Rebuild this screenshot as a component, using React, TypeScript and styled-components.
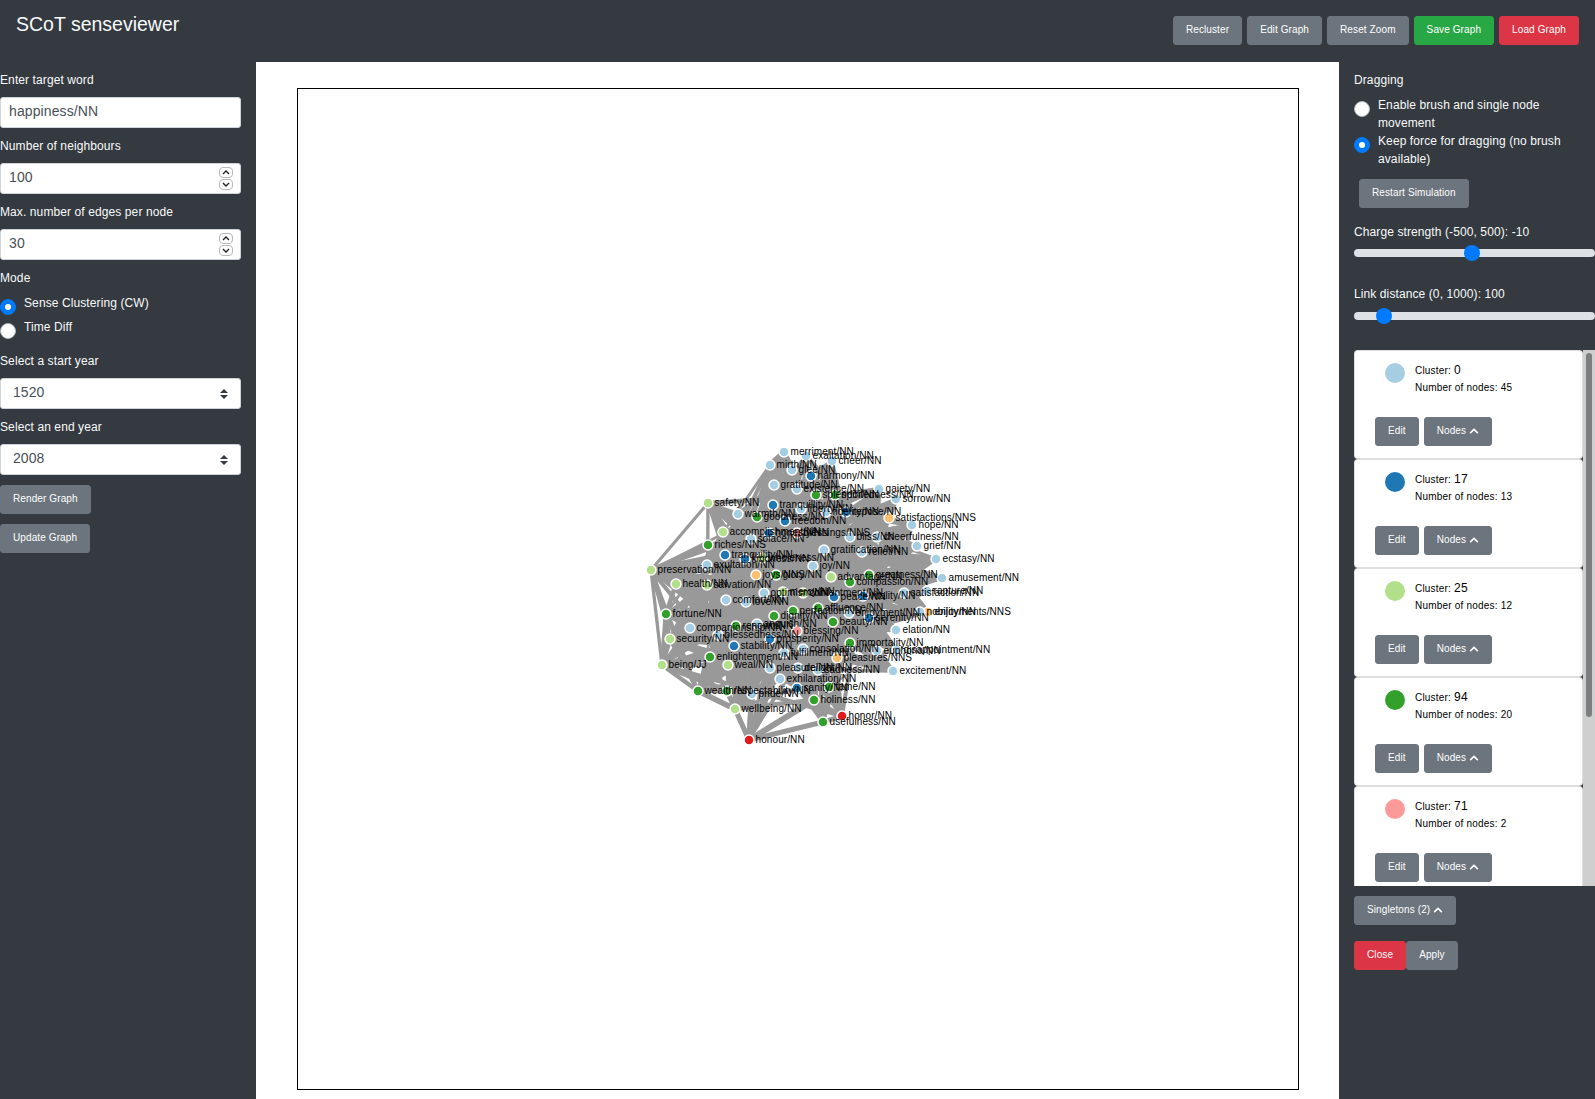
import React from 'react';
import styled, { createGlobalStyle } from 'styled-components';
import { FaChevronUp } from 'react-icons/fa';

const GlobalStyle = createGlobalStyle`
  html, body {
    margin: 0;
    height: 100%;
    overflow: hidden;
    background: #343a40;
    font-family: "Liberation Sans", Arial, sans-serif;
    font-size: 12px;
    line-height: 18px;
    letter-spacing: 0.1px;
    color: #f8f9fa;
  }
  * { box-sizing: border-box; }
`;

const Page = styled.div`
  height: 1099px;
  display: flex;
  flex-direction: column;
`;

const TopBar = styled.header`
  height: 62px;
  flex: none;
  display: flex;
  justify-content: space-between;
  align-items: flex-start;
  padding: 16px 16px 0;
`;

const Brand = styled.div`
  font-size: 19.5px;
  line-height: 17px;
  letter-spacing: 0;
`;

const TopActions = styled.div`
  display: flex;
  gap: 5px;
`;

const Button = styled.button<{ $tone?: 'grey' | 'green' | 'red' }>`
  font: inherit;
  font-size: 10px;
  line-height: 15px;
  letter-spacing: 0.11px;
  height: 29px;
  padding: 5px 12px 7px;
  border: 1px solid
    ${p => (p.$tone === 'green' ? '#28a745' : p.$tone === 'red' ? '#dc3545' : '#6c757d')};
  border-radius: 3px;
  color: #fff;
  white-space: nowrap;
  background: ${p => (p.$tone === 'green' ? '#28a745' : p.$tone === 'red' ? '#dc3545' : '#6c757d')};
  display: inline-flex;
  align-items: center;
  gap: 3px;
`;

const Body = styled.div`
  flex: 1;
  display: flex;
  min-height: 0;
`;

const LeftPanel = styled.aside`
  width: 256px;
  flex: none;
  padding: 9px 15.4px 0 0;
`;

const Field = styled.div`
  margin-bottom: 9px;
`;

const Label = styled.label`
  display: block;
  margin-bottom: 8px;
`;

const TextInput = styled.input`
  display: block;
  width: 100%;
  height: 31px;
  padding: 0 9px 4px 8px;
  background: #fff;
  border: 1px solid #ced4da;
  border-radius: 3px;
  font: inherit;
  font-size: 14px;
  letter-spacing: 0.1px;
  color: #495057;
  outline: none;
  appearance: textfield;

  &::-webkit-inner-spin-button {
    appearance: none;
    margin: 0;
  }
`;

const NumberWrap = styled.div`
  position: relative;
`;

const SpinStack = styled.div`
  position: absolute;
  right: 8px;
  top: 4px;
  display: flex;
  flex-direction: column;
  gap: 1px;
`;

const SpinKey = styled.span`
  width: 14px;
  height: 11px;
  border: 1px solid #b9b9b9;
  border-radius: 4px;
  background: #fff;
  display: flex;
  align-items: center;
  justify-content: center;
`;

const RadioRow = styled.label`
  display: flex;
  gap: 8px;
  align-items: flex-start;
`;

const RadioGroup = styled.div`
  height: 48px;
  margin-bottom: 9px;

  ${RadioRow} {
    height: 24px;
  }
`;

const RadioMark = styled.input`
  appearance: none;
  width: 16px;
  height: 16px;
  margin: 4px 0 0;
  flex: none;
  border-radius: 50%;
  background: #fff;
  border: 1px solid #adb5bd;
  position: relative;

  &:checked {
    background: #007bff;
    border-color: #007bff;
  }
  &:checked::after {
    content: '';
    position: absolute;
    left: 4px;
    top: 4px;
    width: 6px;
    height: 6px;
    border-radius: 50%;
    background: #fff;
  }
`;

const RadioText = styled.span`
  margin-top: -1px;
`;

const SelectWrap = styled.div`
  position: relative;

  svg {
    position: absolute;
    right: 13px;
    top: 11px;
  }
`;

const YearSelect = styled.select`
  appearance: none;
  display: block;
  width: 100%;
  height: 31px;
  padding: 0 12px 4px;
  background: #fff;
  border: 1px solid #ced4da;
  border-radius: 3px;
  font: inherit;
  font-size: 14px;
  letter-spacing: 0.08px;
  color: #495057;
`;

const LeftActions = styled.div`
  display: flex;
  flex-direction: column;
  align-items: flex-start;
  gap: 10px;
  margin-top: 10px;
`;

const Main = styled.main`
  flex: 1;
  background: #fff;
  padding: 26px 0 0 41px;
  display: flex;
  align-items: flex-start;
  min-width: 0;
`;

const GraphBox = styled.div`
  width: 1002px;
  height: 1002px;
  border: 1px solid #000;
  flex: none;

  svg {
    display: block;
  }
`;

const RightPanel = styled.aside`
  width: 256px;
  flex: none;
  padding: 9px 0 0 15px;
  display: flex;
  flex-direction: column;
  align-items: flex-start;
  overflow: hidden;
`;

const DragOptions = styled.div`
  margin-top: 7px;
  width: 226px;
`;

const DragRow = styled.label`
  display: flex;
  gap: 8px;
  align-items: flex-start;
  height: 36px;

  ${RadioMark} {
    margin-top: 5px;
  }
`;

const RestartWrap = styled.div`
  margin: 11px 0 0 5px;
`;

const SliderLabel = styled.div<{ $gap: number }>`
  margin-top: ${p => p.$gap}px;
`;

const Slider = styled.input<{ $offset: number }>`
  appearance: none;
  display: block;
  width: 240.5px;
  height: 16px;
  margin: ${p => p.$offset}px 0 0;
  background: transparent;
  flex: none;

  &::-webkit-slider-runnable-track {
    height: 8px;
    border-radius: 8px;
    background: #dee2e6;
  }
  &::-webkit-slider-thumb {
    appearance: none;
    width: 16px;
    height: 16px;
    margin-top: -4px;
    border-radius: 50%;
    background: #007bff;
  }
`;

const ClusterPane = styled.div`
  width: 241px;
  height: 536px;
  flex: none;
  margin-top: 26px;
  display: flex;
`;

const ClusterList = styled.div`
  width: 229px;
  flex: none;
  overflow: hidden;
`;

const ScrollTrack = styled.div`
  flex: 1;
  background: #cfcfcf;
  padding: 3px 0 0 3px;
`;

const ScrollThumb = styled.div`
  width: 6px;
  height: 364px;
  border-radius: 3px;
  background: #7b7f80;
`;

const Card = styled.article`
  height: 109px;
  background: #fff;
  border: 1px solid rgba(0, 0, 0, 0.125);
  border-radius: 4px;
  color: #000;
  padding: 11px 20px 0;
`;

const CardHead = styled.div`
  display: flex;
  gap: 10px;
  padding-left: 10px;
`;

const Swatch = styled.span<{ $color: string }>`
  width: 20px;
  height: 20px;
  margin-top: 1px;
  border-radius: 50%;
  flex: none;
  background: ${p => p.$color};
`;

const CardInfo = styled.div`
  font-size: 10px;
  line-height: 17px;
  letter-spacing: 0.2px;
`;

const ClusterId = styled.span`
  font-size: 12px;
`;

const CardActions = styled.div`
  display: flex;
  gap: 5px;
  margin-top: 21px;
`;

const BottomActions = styled.div`
  display: flex;
  margin-top: 16px;
`;

const SingletonWrap = styled.div`
  margin-top: 10px;
`;

type GraphNode = [string, number, number, string];

const blue = '#a6cee3';
const navy = '#1f78b4';
const lime = '#b2df8a';
const green = '#33a02c';
const pink = '#fb9a99';
const orange = '#fdbf6f';
const red = '#e31a1c';

const nodes: GraphNode[] = [
  ['safety/NN', 708, 503, lime],
  ['merriment/NN', 784, 452, blue],
  ['exaltation/NN', 806, 456, blue],
  ['mirth/NN', 770, 465, blue],
  ['glee/NN', 792, 470, blue],
  ['harmony/NN', 811, 476, navy],
  ['cheer/NN', 832, 461, blue],
  ['gratitude/NN', 774, 485, blue],
  ['existence/NN', 797, 489, blue],
  ['splendor/NN', 816, 495, green],
  ['spiritedness/NN', 835, 495, green],
  ['gaiety/NN', 879, 489, blue],
  ['sorrow/NN', 896, 499, blue],
  ['tranquillity/NN', 773, 505, navy],
  ['liberty/NN', 801, 509, blue],
  ['repose/NN', 846, 512, navy],
  ['fidelity/NN', 826, 512, blue],
  ['satisfactions/NNS', 889, 518, orange],
  ['warmth/NN', 738, 514, blue],
  ['goodness/NN', 757, 517, green],
  ['freedom/NN', 785, 521, navy],
  ['hope/NN', 912, 525, blue],
  ['accomplishment/NN', 723, 532, lime],
  ['honesty/NN', 769, 533, navy],
  ['blessings/NNS', 797, 533, pink],
  ['solace/NN', 751, 539, blue],
  ['bliss/NN', 850, 537, blue],
  ['cheerfulness/NN', 877, 537, blue],
  ['grief/NN', 917, 546, blue],
  ['riches/NNS', 708, 545, green],
  ['gratification/NN', 824, 550, blue],
  ['relief/NN', 862, 552, blue],
  ['tranquility/NN', 725, 555, navy],
  ['kindness/NN', 745, 559, navy],
  ['wholeness/NN', 762, 558, lime],
  ['ecstasy/NN', 936, 559, blue],
  ['exultation/NN', 707, 565, blue],
  ['joy/NN', 813, 566, blue],
  ['preservation/NN', 651, 570, lime],
  ['joys/NNS', 756, 575, orange],
  ['glory/NN', 776, 575, green],
  ['advantage/NN', 831, 577, lime],
  ['greatness/NN', 869, 575, green],
  ['compassion/NN', 850, 582, green],
  ['amusement/NN', 942, 578, blue],
  ['health/NN', 676, 584, lime],
  ['salvation/NN', 707, 585, lime],
  ['rapture/NN', 927, 591, blue],
  ['satisfaction/NN', 904, 593, blue],
  ['optimism/NN', 764, 593, blue],
  ['mercy/NN', 783, 592, lime],
  ['comfort/NN', 726, 600, blue],
  ['love/NN', 746, 602, blue],
  ['contentment/NN', 803, 593, lime],
  ['peace/NN', 834, 597, navy],
  ['vitality/NN', 863, 596, navy],
  ['affluence/NN', 818, 608, green],
  ['perfection/NN', 793, 611, green],
  ['enjoyment/NN', 849, 613, blue],
  ['enjoyments/NNS', 928, 612, orange],
  ['fortune/NN', 666, 614, green],
  ['dignity/NN', 774, 616, green],
  ['nobility/NN', 920, 612, blue],
  ['serenity/NN', 869, 618, navy],
  ['beauty/NN', 833, 622, green],
  ['renown/NN', 736, 626, green],
  ['anguish/NN', 757, 624, blue],
  ['companionship/NN', 690, 628, blue],
  ['elation/NN', 896, 630, blue],
  ['blessing/NN', 797, 631, pink],
  ['blessedness/NN', 718, 635, blue],
  ['security/NN', 670, 639, lime],
  ['prosperity/NN', 770, 639, navy],
  ['immortality/NN', 850, 643, green],
  ['stability/NN', 734, 646, navy],
  ['consolation/NN', 803, 649, blue],
  ['euphoria/NN', 877, 651, blue],
  ['disappointment/NN', 897, 650, blue],
  ['fulfilment/NN', 784, 653, blue],
  ['enlightenment/NN', 710, 657, green],
  ['pleasures/NNS', 837, 658, orange],
  ['pleasure/NN', 770, 668, blue],
  ['weal/NN', 728, 665, lime],
  ['being/JJ', 662, 665, lime],
  ['delight/NN', 798, 668, blue],
  ['sadness/NN', 818, 670, blue],
  ['excitement/NN', 893, 671, blue],
  ['exhilaration/NN', 780, 679, blue],
  ['sanity/NN', 797, 688, navy],
  ['fame/NN', 829, 687, green],
  ['wealth/NN', 698, 691, green],
  ['respectability/NN', 727, 691, green],
  ['pride/NN', 752, 694, blue],
  ['holiness/NN', 814, 700, green],
  ['wellbeing/NN', 735, 709, lime],
  ['honor/NN', 842, 716, red],
  ['usefulness/NN', 823, 722, green],
  ['honour/NN', 749, 740, red],
];

// edges along the outline of the cloud, the inner ones are generated below
const outline: [string, string[]][] = [
  ['safety', ['riches', 'accomplishment', 'preservation', 'warmth', 'tranquility', 'solace', 'kindness', 'joys', 'love', 'dignity']],
  ['preservation', ['health', 'fortune', 'security', 'riches', 'salvation', 'exultation', 'comfort', 'being', 'tranquility', 'renown']],
  ['fortune', ['security', 'being', 'companionship', 'wealth', 'health', 'renown']],
  ['being', ['security', 'wealth', 'weal', 'enlightenment', 'stability', 'respectability']],
  ['security', ['wealth', 'enlightenment', 'weal', 'renown', 'stability']],
  ['wealth', ['respectability', 'weal', 'enlightenment', 'wellbeing', 'blessedness']],
  ['honour', ['wellbeing', 'usefulness', 'respectability', 'pride', 'holiness']],
  ['usefulness', ['holiness', 'fame', 'honor', 'sanity']],
  ['honor', ['fame', 'holiness']],
  ['wellbeing', ['pride', 'respectability', 'holiness', 'sanity', 'stability']],
  ['ecstasy', ['relief', 'cheerfulness', 'compassion', 'gratification', 'greatness', 'joy']],
  ['amusement', ['compassion', 'relief', 'greatness']],
  ['excitement', ['sadness', 'pleasures']],
  ['enjoyments', ['compassion', 'greatness', 'serenity']],
  ['rapture', ['compassion', 'advantage']],
  ['elation', ['enjoyment', 'vitality', 'beauty']],
  ['grief', ['cheerfulness', 'relief']],
  ['hope', ['cheerfulness', 'satisfactions', 'bliss']],
  ['sorrow', ['satisfactions', 'cheerfulness', 'bliss']],
  ['gaiety', ['spiritedness', 'bliss', 'cheerfulness', 'repose']],
  ['satisfactions', ['cheerfulness', 'relief', 'gratification', 'repose']],
  ['merriment', ['glee', 'mirth']],
  ['mirth', ['gratitude', 'glee', 'tranquillity']],
  ['cheer', ['harmony', 'splendor']],
  ['glee', ['harmony', 'gratitude', 'existence', 'liberty']],
  ['gratitude', ['tranquillity', 'warmth', 'goodness', 'freedom']],
  ['harmony', ['spiritedness', 'liberty', 'freedom']],
];

const centre = { x: 780, y: 590 };

const pseudo = (a: number, b: number) => {
  const v = Math.sin(a * 12.9898 + b * 78.233) * 43758.5453;
  return v - Math.floor(v);
};

const findNode = (prefix: string) => nodes.find(n => n[0].startsWith(prefix + '/'));

const graphEdges = () => {
  const out: { x1: number; y1: number; x2: number; y2: number; w: number }[] = [];
  nodes.forEach((a, i) => {
    nodes.forEach((b, j) => {
      if (j <= i) return;
      const mid = Math.hypot((a[1] + b[1]) / 2 - centre.x, (a[2] + b[2]) / 2 - centre.y);
      const r = pseudo(i + 1, j + 1);
      const keep = mid < 50 ? r < 0.38 : mid < 85 ? r < 0.16 : mid < 115 ? r < 0.035 : false;
      if (keep) {
        out.push({ x1: a[1], y1: a[2], x2: b[1], y2: b[2], w: 2 + pseudo(j, i) * 2.5 });
      }
    });
  });
  outline.forEach(([from, targets], i) => {
    const a = findNode(from);
    targets.forEach((to, j) => {
      const b = findNode(to);
      if (a && b) {
        out.push({ x1: a[1], y1: a[2], x2: b[1], y2: b[2], w: 3 + pseudo(i, j) * 3 });
      }
    });
  });
  return out;
};

const edges = graphEdges();

const GraphView = () => (
  <svg width={1000} height={1000} viewBox="298 89 1000 1000">
    <g stroke="#999">
      {edges.map((e, i) => (
        <line key={i} x1={e.x1} y1={e.y1} x2={e.x2} y2={e.y2} strokeWidth={e.w} />
      ))}
    </g>
    {nodes.map(n => (
      <circle key={n[0]} cx={n[1]} cy={n[2]} r={5} fill={n[3]} stroke="#fff" strokeWidth={1.5} />
    ))}
    <g fontSize={10} fill="#000" letterSpacing={0.1} fontFamily='"Liberation Sans", Arial, sans-serif'>
      {nodes.map(n => (
        <text key={n[0]} x={n[1] + 6.5} y={n[2] + 2.8}>
          {n[0]}
        </text>
      ))}
    </g>
  </svg>
);

const clusters = [
  { id: 0, count: 45, color: blue },
  { id: 17, count: 13, color: navy },
  { id: 25, count: 12, color: lime },
  { id: 94, count: 20, color: green },
  { id: 71, count: 2, color: pink },
  { id: 33, count: 4, color: orange },
  { id: 58, count: 2, color: red },
];

const SelectArrows = () => (
  <svg width="8" height="10" viewBox="0 0 8 10">
    <path d="M4 0 0 4h8zM4 10 0 6h8z" fill="#343a40" />
  </svg>
);

const Chevron = ({ up }: { up?: boolean }) => (
  <svg width="8" height="5" viewBox="0 0 8 5">
    <path d={up ? 'M1 4 4 1l3 3' : 'M1 1l3 3 3-3'} fill="none" stroke="#222" strokeWidth="1.4" />
  </svg>
);

const NumberField = ({ value }: { value: number }) => (
  <NumberWrap>
    <TextInput type="number" defaultValue={value} />
    <SpinStack>
      <SpinKey>
        <Chevron up />
      </SpinKey>
      <SpinKey>
        <Chevron />
      </SpinKey>
    </SpinStack>
  </NumberWrap>
);

export default function App() {
  return (
    <Page>
      <GlobalStyle />
      <TopBar>
        <Brand>SCoT senseviewer</Brand>
        <TopActions>
          <Button>Recluster</Button>
          <Button>Edit Graph</Button>
          <Button>Reset Zoom</Button>
          <Button $tone="green">Save Graph</Button>
          <Button $tone="red">Load Graph</Button>
        </TopActions>
      </TopBar>
      <Body>
        <LeftPanel>
          <Field>
            <Label>Enter target word</Label>
            <TextInput type="text" defaultValue="happiness/NN" />
          </Field>
          <Field>
            <Label>Number of neighbours</Label>
            <NumberField value={100} />
          </Field>
          <Field>
            <Label>Max. number of edges per node</Label>
            <NumberField value={30} />
          </Field>
          <Label>Mode</Label>
          <RadioGroup>
            <RadioRow>
              <RadioMark type="radio" name="mode" defaultChecked />
              <RadioText>Sense Clustering (CW)</RadioText>
            </RadioRow>
            <RadioRow>
              <RadioMark type="radio" name="mode" />
              <RadioText>Time Diff</RadioText>
            </RadioRow>
          </RadioGroup>
          <Field>
            <Label>Select a start year</Label>
            <SelectWrap>
              <YearSelect defaultValue="1520">
                <option>1520</option>
              </YearSelect>
              <SelectArrows />
            </SelectWrap>
          </Field>
          <Field>
            <Label>Select an end year</Label>
            <SelectWrap>
              <YearSelect defaultValue="2008">
                <option>2008</option>
              </YearSelect>
              <SelectArrows />
            </SelectWrap>
          </Field>
          <LeftActions>
            <Button>Render Graph</Button>
            <Button>Update Graph</Button>
          </LeftActions>
        </LeftPanel>
        <Main>
          <GraphBox>
            <GraphView />
          </GraphBox>
        </Main>
        <RightPanel>
          <div>Dragging</div>
          <DragOptions>
            <DragRow>
              <RadioMark type="radio" name="drag" />
              <span>Enable brush and single node movement</span>
            </DragRow>
            <DragRow>
              <RadioMark type="radio" name="drag" defaultChecked />
              <span>Keep force for dragging (no brush available)</span>
            </DragRow>
          </DragOptions>
          <RestartWrap>
            <Button>Restart Simulation</Button>
          </RestartWrap>
          <SliderLabel $gap={15}>Charge strength (-500, 500): -10</SliderLabel>
          <Slider $offset={4} type="range" min={-500} max={500} defaultValue={-10} />
          <SliderLabel $gap={24}>Link distance (0, 1000): 100</SliderLabel>
          <Slider $offset={5} type="range" min={0} max={1000} defaultValue={100} />
          <ClusterPane>
            <ClusterList>
              {clusters.map(c => (
                <Card key={c.id}>
                  <CardHead>
                    <Swatch $color={c.color} />
                    <CardInfo>
                      <div>
                        Cluster: <ClusterId>{c.id}</ClusterId>
                      </div>
                      <div>Number of nodes: {c.count}</div>
                    </CardInfo>
                  </CardHead>
                  <CardActions>
                    <Button>Edit</Button>
                    <Button>
                      Nodes <FaChevronUp size={10} />
                    </Button>
                  </CardActions>
                </Card>
              ))}
            </ClusterList>
            <ScrollTrack>
              <ScrollThumb />
            </ScrollTrack>
          </ClusterPane>
          <SingletonWrap>
            <Button>
              Singletons (2) <FaChevronUp size={10} />
            </Button>
          </SingletonWrap>
          <BottomActions>
            <Button $tone="red">Close</Button>
            <Button>Apply</Button>
          </BottomActions>
        </RightPanel>
      </Body>
    </Page>
  );
}
